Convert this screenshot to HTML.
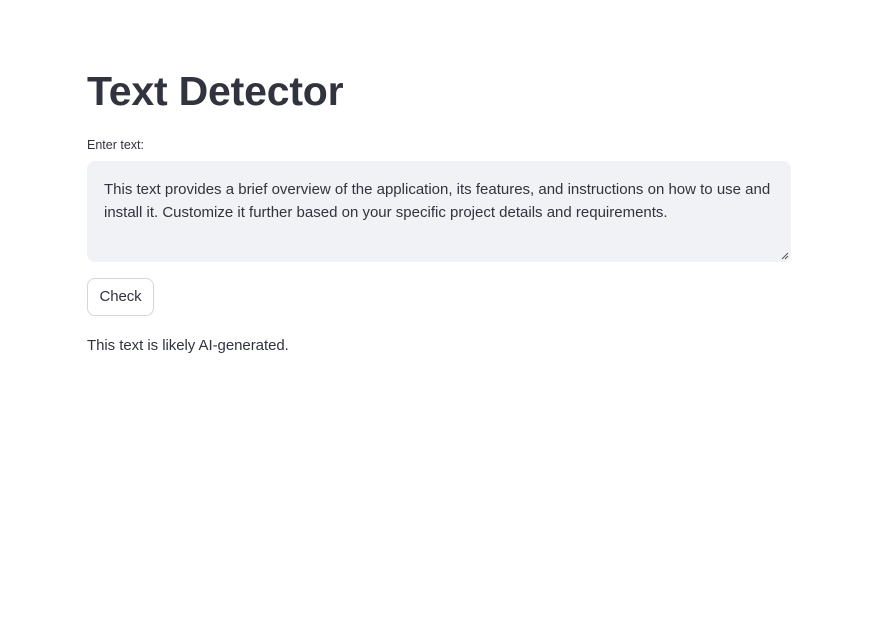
<!DOCTYPE html>
<html><head><meta charset="utf-8"><style>
html,body{margin:0;padding:0;background:#fff;width:881px;height:634px;overflow:hidden;font-family:"Liberation Sans",sans-serif;color:#31333f}
h1{position:absolute;left:87px;top:66px;margin:0;font-size:41px;font-weight:bold;letter-spacing:-0.2px;line-height:50px;color:#31333f}
.lbl{position:absolute;left:87px;top:138px;font-size:12.5px;letter-spacing:0}
.ta{position:absolute;left:87px;top:161px;width:704px;height:101px;background:#f0f2f6;border-radius:8px}
.ta p{margin:0;position:absolute;left:17px;top:17px;font-size:15px;line-height:23px;letter-spacing:0;white-space:nowrap}
.grip{position:absolute;right:2px;bottom:2px;width:8px;height:8px}
.btn{position:absolute;left:87px;top:278px;border:1px solid #d6d6d9;border-radius:8px;box-sizing:border-box;width:67px;height:38px;font-size:15px;line-height:36px;text-align:center;letter-spacing:-0.1px}
.res{position:absolute;left:87px;top:337px;font-size:15px;letter-spacing:-0.05px}
</style></head><body>
<h1>Text Detector</h1>
<div class="lbl">Enter text:</div>
<div class="ta"><p>This text provides a brief overview of the application, its features, and instructions on how to use and<br>install it. Customize it further based on your specific project details and requirements.</p>
<svg class="grip" viewBox="0 0 8 8"><path d="M7 1L1 7M7 4L4 7" stroke="#555" stroke-width="1"/></svg></div>
<div class="btn">Check</div>
<div class="res">This text is likely AI-generated.</div>
</body></html>
